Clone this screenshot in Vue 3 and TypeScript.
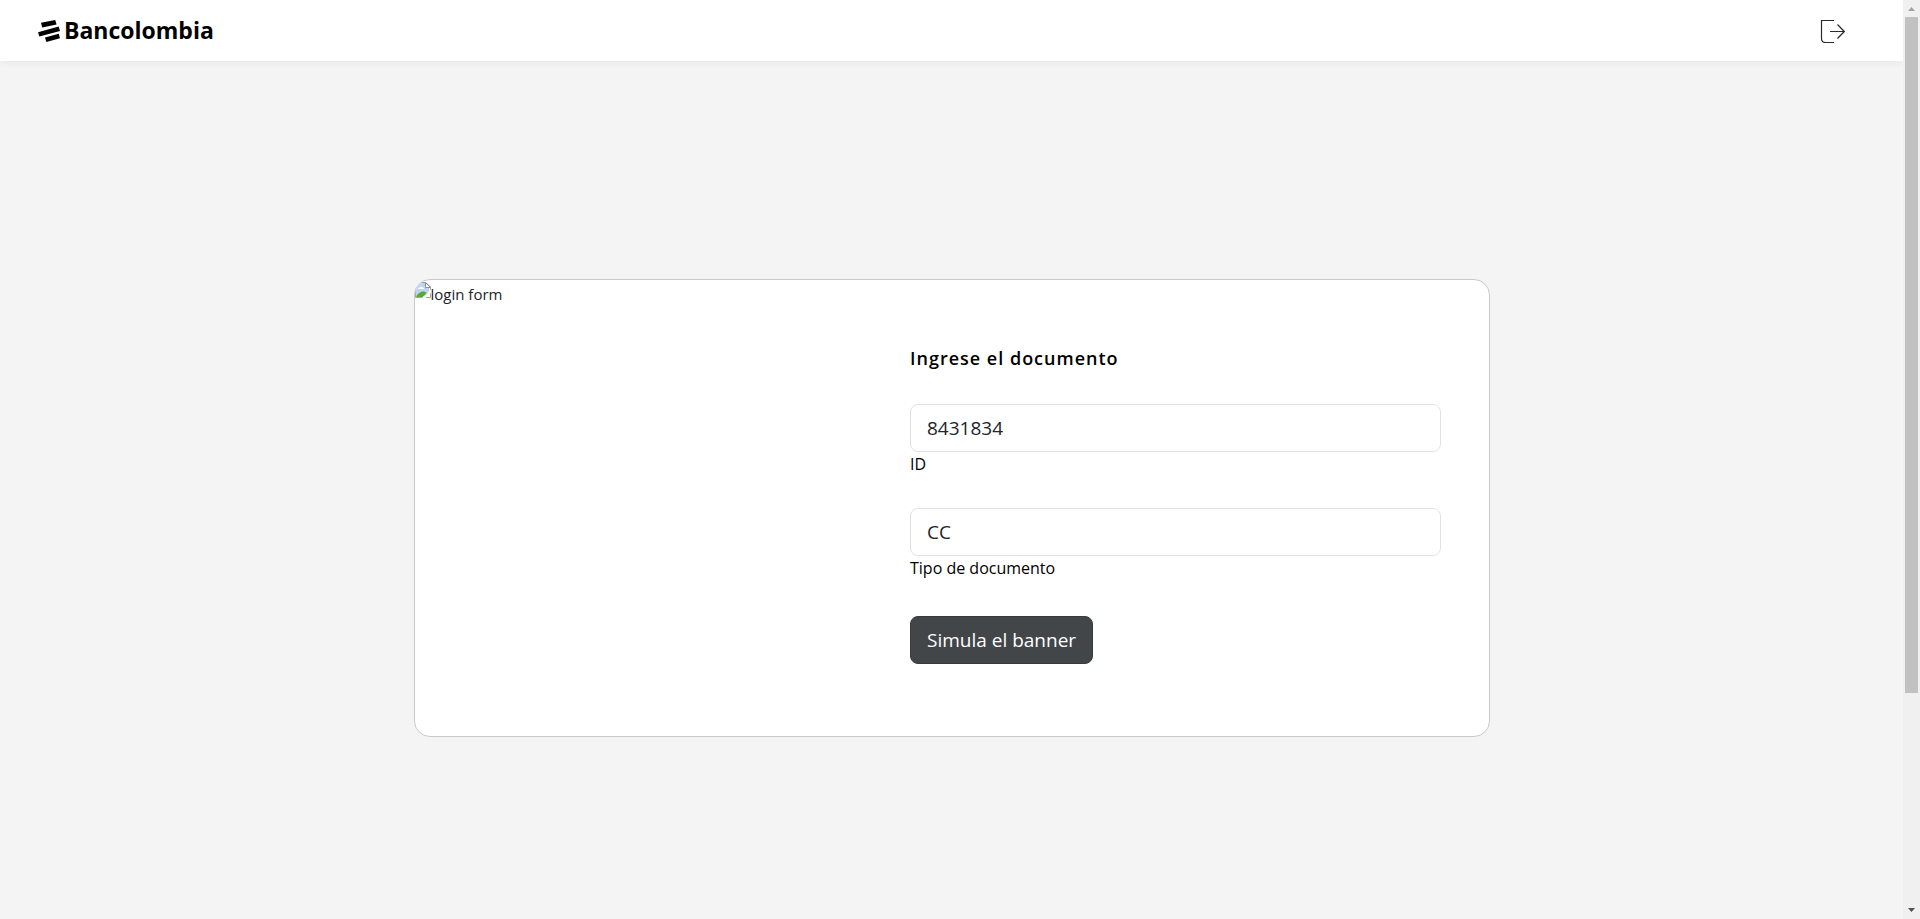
<script setup lang="ts">
import { ref } from 'vue'

const documentId = ref<string>('8431834')
const documentType = ref<string>('CC')
</script>

<template>
  <div class="window">
    <div class="page">
      <header class="navbar">
        <a class="brand" href="#" aria-label="Bancolombia">
          <svg class="brand-mark" viewBox="0 0 22 22" aria-hidden="true">
            <path d="M3 2.800 17.200.1 18.600 4.500 4.200 7.400Z" />
            <path d="M.1 12.200 20.700 6.500 22 11 1.300 16.600Z" />
            <path d="M7 17.600 20.700 13.700 22 18.200 8.300 22Z" />
          </svg>
          <span>Bancolombia</span>
        </a>
        <button class="logout" type="button" aria-label="Salir">
          <svg viewBox="0 0 25 24" aria-hidden="true">
            <path d="M14 1.500H1.500V19.500Q1.500 23.500 5.500 23.500H14" />
            <path d="M10 12.500H24M17.500 5.500 24.300 12.500 17.500 19.500" />
          </svg>
        </button>
      </header>

      <main class="content">
        <section class="card">
          <div class="picture" role="img" aria-label="login form">
            <svg viewBox="0 0 16 16" aria-hidden="true">
              <path d="M.5.500H11L15.500 5V15.500H.5Z" fill="#fff" stroke="#a5a5a5" />
              <path d="M1 1H10V6H14V10L9 14H1Z" fill="#c0d2f3" />
              <path d="M3 7Q3 5 5 5.500 6 3.500 8 5.500 9.500 6 9 7Z" fill="#fff" />
              <path d="M1 15Q4 9 9 9.500L12 11 8 15Z" fill="#54ab35" />
              <path d="M10.500.5V5.500H15.500Z" fill="#fff" stroke="#8d8d8d" />
              <path d="M16 7.500 7 16H10.500L16 11Z" fill="#fff" />
            </svg>
            <span>login form</span>
          </div>

          <form class="form" @submit.prevent>
            <h1>Ingrese el documento</h1>
            <div class="field">
              <input id="document-id" v-model="documentId" type="text" />
              <label for="document-id">ID</label>
            </div>
            <div class="field">
              <input id="document-type" v-model="documentType" type="text" />
              <label for="document-type">Tipo de documento</label>
            </div>
            <button class="submit" type="submit">Simula el banner</button>
          </form>
        </section>
      </main>
    </div>

    <div class="scrollbar" aria-hidden="true">
      <svg viewBox="0 0 17 17"><path d="M5 11H12L8.500 7Z" fill="#a3a3a3" /></svg>
      <div class="track"><div class="thumb"></div></div>
      <svg viewBox="0 0 17 17"><path d="M5 6H12L8.500 10Z" fill="#505050" /></svg>
    </div>
  </div>
</template>

<style>
body {
  margin: 0;
}
</style>

<style scoped>
* {
  box-sizing: border-box;
}

.window {
  display: flex;
  min-height: 100vh;
  background: #f4f4f4;
  color: #212529;
  font-family: "Open Sans", "Noto Sans", sans-serif;
  font-size: 16px;
  line-height: 24px;
}

.page {
  display: flex;
  flex: 1;
  flex-direction: column;
  min-width: 0;
}

.navbar {
  display: flex;
  align-items: center;
  justify-content: space-between;
  height: 61px;
  padding: 0 58px 0 38px;
  background: #fff;
  box-shadow: 0 2px 8px rgba(0, 0, 0, 0.05);
}

.brand {
  display: flex;
  align-items: center;
  gap: 4px;
  color: #000;
  font-size: 23px;
  font-weight: 700;
  line-height: 22px;
  text-decoration: none;
}

.brand span {
  padding-bottom: 2px;
}

.brand-mark {
  width: 22px;
  height: 22px;
}

.logout {
  padding: 0;
  border: 0;
  background: none;
  cursor: pointer;
}

.logout svg {
  display: block;
  width: 25px;
  height: 24px;
  fill: none;
  stroke: #2c2a29;
  stroke-width: 1.2;
}

.content {
  display: flex;
  flex: 1;
  align-items: center;
  justify-content: center;
  padding: 36px 24px 0;
}

.card {
  display: grid;
  grid-template-columns: 5fr 7fr;
  width: 100%;
  max-width: 1076px;
  overflow: hidden;
  border: 1px solid #c8c9ca;
  border-radius: 16px;
  background: #fff;
}

.picture {
  display: flex;
  align-items: flex-start;
  padding-top: 2px;
  font-size: 15px;
}

.picture svg {
  width: 16px;
  height: 16px;
}

.form {
  padding: 66px 48px 72px;
  color: #000;
}

h1 {
  margin: 0 0 34px;
  font-size: 18px;
  font-weight: 600;
  letter-spacing: 1px;
  line-height: 24px;
}

.field {
  display: flex;
  flex-direction: column;
  margin-bottom: 32px;
}

.field input {
  width: 100%;
  height: 48px;
  padding: 8px 16px;
  border: 1px solid #dee2e6;
  border-radius: 8px;
  background: #fff;
  color: #212529;
  font: inherit;
  font-size: 19px;
  line-height: 30px;
}

.submit {
  height: 48px;
  margin-top: 4px;
  padding: 0 16px;
  border: 1px solid #373b3e;
  border-radius: 8px;
  background: #424649;
  color: #fff;
  font: inherit;
  font-size: 19px;
  cursor: pointer;
}

.scrollbar {
  display: flex;
  flex-direction: column;
  width: 17px;
  background: #f0f0f0;
}

.scrollbar svg {
  width: 17px;
  height: 17px;
}

.track {
  flex: 1;
  padding: 0 2px;
}

.thumb {
  height: 676px;
  background: #c1c1c1;
}
</style>
